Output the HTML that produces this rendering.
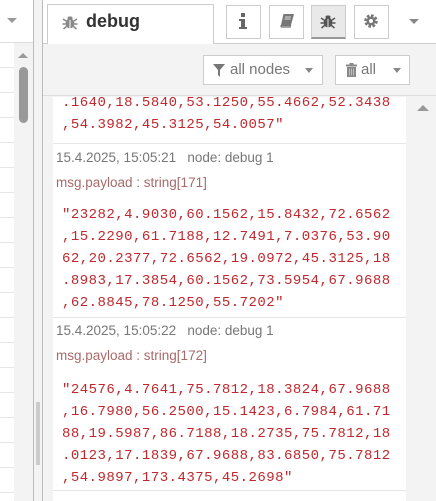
<!DOCTYPE html>
<html><head><style>
*{box-sizing:border-box;margin:0;padding:0}
body{width:436px;height:501px;overflow:hidden;background:#f3f3f3;font-family:"Liberation Sans",sans-serif;position:relative}
.abs{position:absolute}
.btn{position:absolute;background:#fff;border:1px solid #ccc;}
.mono{font-family:"Liberation Mono",monospace;font-size:14px;letter-spacing:0.48px;color:#c0282d;line-height:22px;white-space:pre}
.hdr{font-size:13.5px;color:#777}
.pl{font-size:13.5px;color:#a86a6a}
</style></head><body>
<div class="abs" style="left:0;top:0;width:33px;height:501px;background:#fff"></div>
<div class="abs" style="left:0;top:42px;width:33px;height:1px;background:#ddd"></div>
<div class="abs" style="left:14px;top:43px;width:19px;height:458px;background:#f3f3f3"></div>
<div class="abs" style="left:0;top:43px;width:14px;height:458px;background:repeating-linear-gradient(#fff 0 24px,#e6e6e6 24px 25px)"></div>
<div class="abs" style="left:7px;top:18px;border-left:5px solid transparent;border-right:5px solid transparent;border-top:5px solid #999"></div>
<div class="abs" style="left:18px;top:53px;border-left:5px solid transparent;border-right:5px solid transparent;border-bottom:5px solid #999"></div>
<div class="abs" style="left:19px;top:67px;width:9px;height:56px;background:#999;border-radius:5px"></div>
<div class="abs" style="left:33px;top:0;width:1px;height:501px;background:#bbb"></div>
<div class="abs" style="left:36px;top:402px;width:4px;height:63px;background:#ccc"></div>
<div class="abs" style="left:42px;top:0;width:1px;height:501px;background:#bbb"></div>
<div class="abs" style="left:43px;top:0;width:393px;height:43px;background:#fff"></div>
<div class="abs" style="left:43px;top:43px;width:393px;height:1px;background:#ccc"></div>
<div class="abs" style="left:47px;top:4px;width:167px;height:40px;background:#fff;border:1px solid #ccc;border-bottom:none"></div>
<svg class="abs" style="left:62px;top:14px" width="16" height="16" viewBox="0 0 16 16"><g fill="#888"><ellipse cx="8" cy="9.5" rx="4.5" ry="5"/><rect x="5.5" y="2.5" width="5" height="3" rx="1.5"/><path d="M1 5l3 2M15 5l-3 2M0.5 10h3M15.5 10h-3M1.5 15l3-2.5M14.5 15l-3-2.5" stroke="#888" stroke-width="1.5"/></g><line x1="8" y1="6" x2="8" y2="14.5" stroke="#fff" stroke-width="1"/></svg>
<div class="abs" style="left:86px;top:11px;font-size:18px;font-weight:bold;color:#333">debug</div>
<div class="btn" style="left:226px;top:5px;width:35px;height:34px"></div>
<svg class="abs" style="left:238px;top:13px" width="10" height="16" viewBox="0 0 10 16"><rect x="3" y="0" width="4" height="4" fill="#666"/><path d="M1 6h6v8h2v2H1v-2h2V8H1z" fill="#666"/></svg>
<div class="btn" style="left:269px;top:5px;width:35px;height:34px"></div>
<svg class="abs" style="left:279px;top:13px" width="16" height="16" viewBox="0 0 16 16"><path d="M4.5 1H15l-3 11H2z" fill="#777"/><path d="M2 12.5h9.5l-.3 1.5H2.3a1 1 0 0 1 0-1.5z" fill="none" stroke="#777" stroke-width="1.2"/><path d="M6 4h6M5.5 6h6" stroke="#fff" stroke-width="0.8"/></svg>
<div class="btn" style="left:311px;top:5px;width:35px;height:34px;background:#e9e9e9;border-bottom:2px solid #999"></div>
<svg class="abs" style="left:320px;top:13px" width="16" height="16" viewBox="0 0 16 16"><g fill="#555"><ellipse cx="8" cy="9.5" rx="4.5" ry="5"/><rect x="5.5" y="2.5" width="5" height="3" rx="1.5"/><path d="M1 5l3 2M15 5l-3 2M0.5 10h3M15.5 10h-3M1.5 15l3-2.5M14.5 15l-3-2.5" stroke="#555" stroke-width="1.5"/></g><line x1="8" y1="6" x2="8" y2="14.5" stroke="#e9e9e9" stroke-width="1"/></svg>
<div class="btn" style="left:354px;top:5px;width:35px;height:34px"></div>
<svg class="abs" style="left:363px;top:13px" width="16" height="16" viewBox="0 0 16 16"><circle cx="8" cy="8" r="5" fill="none" stroke="#777" stroke-width="3.5" stroke-dasharray="2.4 1.5"/><circle cx="8" cy="8" r="4.5" fill="#777"/><circle cx="8" cy="8" r="2" fill="#fff"/></svg>
<div class="abs" style="left:409px;top:19px;border-left:5px solid transparent;border-right:5px solid transparent;border-top:5px solid #888"></div>
<div class="btn" style="left:203px;top:55px;width:120px;height:30px"></div>
<svg class="abs" style="left:213px;top:64px" width="12" height="13" viewBox="0 0 12 13"><path d="M0 0h12L7 6v7L5 11V6z" fill="#777"/></svg>
<div class="abs" style="left:230px;top:61px;font-size:15px;color:#777">all nodes</div>
<div class="abs" style="left:305px;top:68px;border-left:4.5px solid transparent;border-right:4.5px solid transparent;border-top:5px solid #888"></div>
<div class="btn" style="left:335px;top:55px;width:75px;height:30px"></div>
<svg class="abs" style="left:346px;top:63px" width="11" height="14" viewBox="0 0 11 14"><rect x="0" y="1.5" width="11" height="2" fill="#888"/><rect x="3.5" y="0" width="4" height="2" fill="#888"/><rect x="1" y="4" width="9" height="10" fill="#888"/><path d="M3.5 5.5v7M5.5 5.5v7M7.5 5.5v7" stroke="#ccc" stroke-width="0.8"/></svg>
<div class="abs" style="left:361px;top:61px;font-size:15px;color:#777">all</div>
<div class="abs" style="left:393px;top:68px;border-left:4.5px solid transparent;border-right:4.5px solid transparent;border-top:5px solid #888"></div>
<div class="abs" style="left:43px;top:95px;width:393px;height:1px;background:#ddd"></div>
<div class="abs" style="left:53px;top:97px;width:353px;height:404px;background:#fff"></div>
<div class="abs" style="left:417px;top:105px;border-left:6px solid transparent;border-right:6px solid transparent;border-bottom:6px solid #999"></div>
<div class="abs mono" style="left:62px;top:92px">.1640,18.5840,53.1250,55.4662,52.3438
,54.3982,45.3125,54.0057"</div>
<div class="abs" style="left:53px;top:143px;width:353px;height:1px;background:#e6e6e6"></div>
<div class="abs hdr" style="left:56px;top:150px">15.4.2025, 15:05:21&nbsp;&nbsp;&nbsp;node: debug 1</div>
<div class="abs pl" style="left:56px;top:175px">msg.payload : string[171]</div>
<div class="abs mono" style="left:62px;top:204px">"23282,4.9030,60.1562,15.8432,72.6562
,15.2290,61.7188,12.7491,7.0376,53.90
62,20.2377,72.6562,19.0972,45.3125,18
.8983,17.3854,60.1562,73.5954,67.9688
,62.8845,78.1250,55.7202"</div>
<div class="abs" style="left:53px;top:317px;width:353px;height:1px;background:#e6e6e6"></div>
<div class="abs hdr" style="left:56px;top:323px">15.4.2025, 15:05:22&nbsp;&nbsp;&nbsp;node: debug 1</div>
<div class="abs pl" style="left:56px;top:348px">msg.payload : string[172]</div>
<div class="abs mono" style="left:62px;top:379px">"24576,4.7641,75.7812,18.3824,67.9688
,16.7980,56.2500,15.1423,6.7984,61.71
88,19.5987,86.7188,18.2735,75.7812,18
.0123,17.1839,67.9688,83.6850,75.7812
,54.9897,173.4375,45.2698"</div>
<div class="abs" style="left:53px;top:490px;width:353px;height:1px;background:#e6e6e6"></div>
</body></html>
